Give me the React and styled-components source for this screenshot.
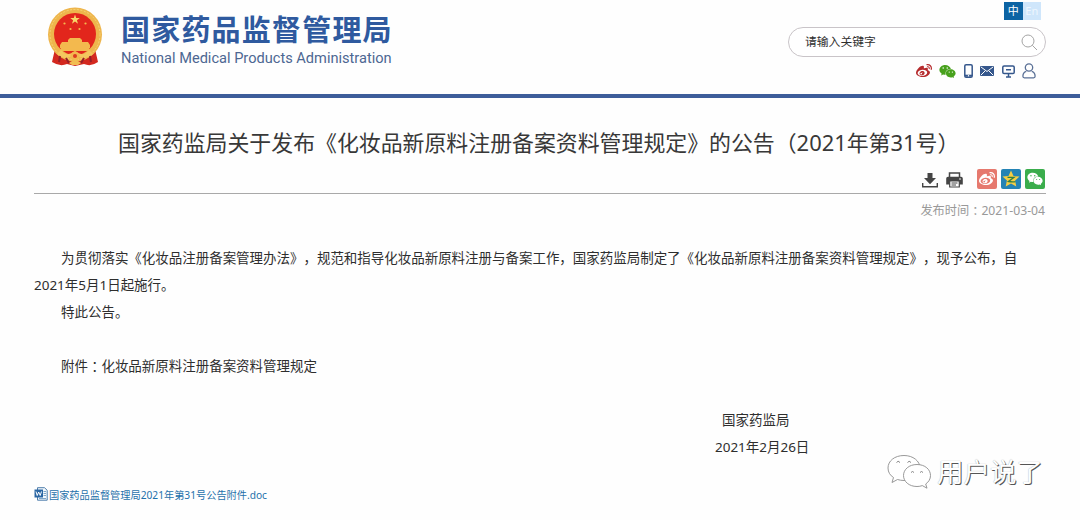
import React from "react";
import styled, { createGlobalStyle, css } from "styled-components";
import { FaWeibo, FaWeixin } from "react-icons/fa";

const GlobalStyle = createGlobalStyle`
  * {
    box-sizing: border-box;
  }

  body {
    margin: 0;
    background: #fefefe;
    color: #2e2e2e;
    font-family: "Noto Sans", "Noto Sans CJK SC", sans-serif;
    text-spacing-trim: space-all;
  }
`;

function Emblem() {
  return (
    <svg width="56" height="60" viewBox="0 0 56 60">
      <path d="M8 42 L5 55 Q13 60 20 57 L28 59 L37 57 Q44 60 51 55 L48 42z" fill="#d3281f" />
      <circle cx="28" cy="27.500" r="27" fill="#eeb54c" />
      <circle cx="28" cy="27.500" r="25" fill="none" stroke="#f6d577" strokeWidth="1" strokeDasharray="2 1.500" />
      <circle cx="28" cy="27" r="21" fill="#e2261c" />
      <path d="M28 7.500l1.200 3.500h3.600l-2.900 2.200 1.100 3.500-3-2.100-3 2.100 1.100-3.500-2.900-2.200h3.600z" fill="#f8d668" />
      <g fill="#f3b94e">
        <circle cx="17.500" cy="16.500" r="1.100" />
        <circle cx="38.500" cy="16.500" r="1.100" />
        <circle cx="23.500" cy="22" r="1.100" />
        <circle cx="32.500" cy="22" r="1.100" />
        <path d="M21 33l2-2h10l2 2v2h6l2 3v3H13v-3l2-3h6z" />
        <path d="M14 41h28l2 3H12z" />
      </g>
      <path d="M14 43q6 8 14 1 8 7 14-1l4 4q-7 7-18 1-11 6-18-1z" fill="#f4c75f" />
      <circle cx="28" cy="49" r="4.500" fill="#f3b94e" />
      <circle cx="28" cy="49" r="2" fill="#dd3b22" />
      <path d="M13 49l-1 6M43 49l1 6M19 51l3 5M37 51l-3 5" stroke="#951f28" strokeWidth="2" />
      <path d="M22 56l6-4 6 4-3 2h-6z" fill="#f1bd52" />
    </svg>
  );
}

function SearchIcon() {
  return (
    <svg width="17" height="17" viewBox="0 0 17 17" fill="none" stroke="#a5a5a5">
      <circle cx="7" cy="7" r="6" />
      <path d="M11.300 11.300L16 16" />
    </svg>
  );
}

function PhoneIcon() {
  return (
    <svg width="9" height="14" viewBox="0 0 9 14">
      <rect x=".8" y=".8" width="7.400" height="12.400" rx="1.300" fill="none" stroke="#35578c" strokeWidth="1.500" />
      <path d="M1 10.700h7v2H1z" fill="#35578c" />
      <circle cx="4.500" cy="11.700" r=".7" fill="#fff" />
    </svg>
  );
}

function MailIcon() {
  return (
    <svg width="14" height="10" viewBox="0 0 14 10">
      <rect width="14" height="10" rx="1" fill="#35578c" />
      <path d="M1 1l6 4.500L13 1M1 9l4-4M13 9L9 5" fill="none" stroke="#fff" strokeWidth="1" />
    </svg>
  );
}

function MonitorIcon() {
  return (
    <svg width="13" height="13" viewBox="0 0 13 13" fill="none" stroke="#35578c" strokeWidth="1.500">
      <rect x=".8" y="1" width="11.400" height="7.500" rx="1.300" />
      <path d="M4 4.800h5M6.500 8.500v3M4 12h5" />
    </svg>
  );
}

function UserIcon() {
  return (
    <svg width="14" height="16" viewBox="0 0 14 16" fill="none" stroke="#5a7096" strokeWidth="1.300">
      <circle cx="7" cy="4.500" r="3.700" />
      <path d="M4.300 8.300C2 9 .9 11 .9 13.300q0 1.500 1.500 1.500h9.200q1.500 0 1.500-1.500c0-2.300-1.100-4.300-3.400-5" />
    </svg>
  );
}

function DownloadIcon() {
  return (
    <svg width="16" height="16" viewBox="0 0 16 16">
      <path d="M5.500 1h5v5H14l-6 6.300L2 6h3.500z" fill="#454545" />
      <path d="M.7 11v3.800h14.600V11" fill="none" stroke="#454545" strokeWidth="1.400" />
    </svg>
  );
}

function PrintIcon() {
  return (
    <svg width="17" height="16" viewBox="0 0 17 16">
      <path d="M3.500 5V1h10v4" fill="none" stroke="#454545" strokeWidth="1.500" />
      <path d="M2 4.800h13a1.800 1.800 0 0 1 1.800 1.800v5.900H.2V6.600A1.800 1.800 0 0 1 2 4.800z" fill="#454545" />
      <circle cx="14" cy="7" r=".8" fill="#fff" />
      <path d="M3.700 9h9.600v6H3.700z" fill="#fff" stroke="#454545" strokeWidth="1.200" />
      <path d="M5.500 11h6M5.500 13h4.500" stroke="#454545" />
    </svg>
  );
}

function QzoneIcon() {
  return (
    <svg width="18" height="18" viewBox="0 0 18 18">
      <path d="M9 .5l2.500 5.400 6 .7-4.400 4 1.200 6-5.300-3-5.300 3 1.200-6-4.400-4 6-.7z" fill="#f6ce45" />
      <path d="M5.500 7.300h6.500l-5.500 4.200q4 .8 7 .2" fill="none" stroke="#318043" strokeWidth="1.300" />
    </svg>
  );
}

function DocIcon() {
  return (
    <svg width="14" height="14" viewBox="0 0 14 14">
      <path d="M3.500.7h7l2.700 2.600v9.900H3.500z" fill="#f3f8fc" stroke="#4e7dab" />
      <path d="M9.500 4.500h2.500M9.500 6.500h2.500M9.500 8.500h2.500M5 11.500h7" stroke="#7ea6c9" />
      <rect x=".5" y="2.500" width="8.500" height="8" fill="#2a66a3" />
      <path d="M2 4.500l1.200 4 1.500-3.500 1.500 3.500 1.300-4" fill="none" stroke="#fff" />
    </svg>
  );
}

function ChatBubbles() {
  return (
    <svg width="46" height="36" viewBox="0 0 46 36" fill="#fff" stroke="#8d8d8d" strokeWidth=".9">
      <path d="M18 1.500C8.500 1.500 2 7 2 14c0 4.200 2.200 7.500 5.500 9.500L6 28.500l5.500-3c2 .6 4 1 6.500 1 9 0 16-5.500 16-12.500S27 1.500 18 1.500z" />
      <path d="M31 10.500c-8 0-13.500 5-13.500 11S23 32.500 31 32.500c2 0 3.700-.3 5.300-.9l4.700 2.600-1.300-4.200c3-2 4.800-5 4.800-8.500 0-6-5.500-11-13.500-11z" />
      <path d="M10.500 8.500q1.500-2.500 3.500 0M21.500 8.500q1.500-2.500 3.500 0M25 18.500q1.500-2 3 0M34 18.500q1.500-2 3 0" fill="none" stroke="#777" />
    </svg>
  );
}

export default function App() {
  return (
    <Page>
      <GlobalStyle />
      <Header>
        <Brand>
          <Emblem />
          <BrandText>
            <BrandName>国家药品监督管理局</BrandName>
            <BrandSub>National Medical Products Administration</BrandSub>
          </BrandText>
        </Brand>
        <Tools>
          <LangSwitch>
            <Lang $active>中</Lang>
            <Lang>En</Lang>
          </LangSwitch>
          <SearchBox>
            <span>请输入关键字</span>
            <SearchIcon />
          </SearchBox>
          <QuickLinks>
            <FaWeibo size={16} color="#b52a2c" />
            <FaWeixin size={17} color="#48a11d" />
            <PhoneIcon />
            <MailIcon />
            <MonitorIcon />
            <UserIcon />
          </QuickLinks>
        </Tools>
      </Header>

      <Article>
        <Title>国家药监局关于发布《化妆品新原料注册备案资料管理规定》的公告（2021年第31号）</Title>
        <Actions>
          <DownloadIcon />
          <PrintIcon />
          <ShareGroup>
            <ShareButton $color="#e6796e">
              <FaWeibo />
            </ShareButton>
            <ShareButton $color="#2483b5">
              <QzoneIcon />
            </ShareButton>
            <ShareButton $color="#3aad4c">
              <FaWeixin />
            </ShareButton>
          </ShareGroup>
        </Actions>
        <PublishDate>
          发布时间<Colon>：</Colon>2021-03-04
        </PublishDate>

        <Body>
          <Paragraph>
            为贯彻落实《化妆品注册备案管理办法》，规范和指导化妆品新原料注册与备案工作，国家药监局制定了《化妆品新原料注册备案资料管理规定》，现予公布，自
            <br />
            2021年5月1日起施行。
          </Paragraph>
          <Paragraph $gap>特此公告。</Paragraph>
          <Paragraph $gap>
            附件<Colon>：</Colon>化妆品新原料注册备案资料管理规定
          </Paragraph>
          <Signature>
            <Signer>国家药监局</Signer>
            <span>2021年2月26日</span>
          </Signature>
        </Body>

        <Attachment>
          <DocIcon />
          <span>国家药品监督管理局2021年第31号公告附件.doc</span>
        </Attachment>
      </Article>

      <Watermark>
        <ChatBubbles />
        <span>用户说了</span>
      </Watermark>
    </Page>
  );
}

const Page = styled.div`
  position: relative;
  width: 1080px;
  height: 520px;
  overflow: hidden;
`;

const Header = styled.header`
  display: flex;
  justify-content: space-between;
  height: 98px;
  padding: 0 34px 0 47px;
  border-bottom: 4px solid #3d5d9a;
`;

const Brand = styled.div`
  display: flex;
  gap: 18px;
  padding-top: 7px;
`;

const BrandText = styled.div`
  display: flex;
  flex-direction: column;
  padding-top: 5px;
  white-space: nowrap;
`;

const BrandName = styled.div`
  color: #2f5a9f;
  font-size: 29px;
  font-weight: 700;
  letter-spacing: 1.2px;
  line-height: 35px;
`;

const BrandSub = styled.div`
  color: #4d6792;
  font-family: Roboto, sans-serif;
  font-size: 14.6px;
  line-height: 23px;
`;

const Tools = styled.div`
  display: flex;
  flex-direction: column;
  width: 258px;
  padding-top: 2px;
`;

const LangSwitch = styled.div`
  display: flex;
  justify-content: flex-end;
  padding-right: 5px;
`;

const Lang = styled.span`
  width: 18.5px;
  height: 18px;
  background: ${(p) => (p.$active ? "#0c63a3" : "#cfe6fb")};
  color: ${(p) => (p.$active ? "#fff" : "#eef6fe")};
  font-size: 11px;
  line-height: 17px;
  text-align: center;
`;

const SearchBox = styled.div`
  display: flex;
  align-items: center;
  justify-content: space-between;
  height: 30px;
  margin-top: 7px;
  padding: 0 7px 0 16px;
  border: 1px solid #c9c4c8;
  border-radius: 15px;
  background: #fff;
  font-size: 11.8px;
  line-height: 16px;

  span {
    padding-bottom: 2px;
  }
`;

const QuickLinks = styled.div`
  display: flex;
  align-items: center;
  justify-content: flex-end;
  gap: 7.500px;
  height: 16px;
  margin-top: 6px;
  padding-right: 10px;
`;

const Article = styled.main`
  display: flex;
  flex-direction: column;
  padding: 0 34px;
`;

const Title = styled.h1`
  margin: 28px 0 0;
  padding-left: 84px;
  color: #383838;
  font-size: 21.9px;
  font-weight: 400;
  line-height: 34px;
  white-space: nowrap;
`;

const Actions = styled.div`
  display: flex;
  align-items: center;
  justify-content: flex-end;
  gap: 8px;
  height: 34px;
  padding: 7px 1px 0 0;
  border-bottom: 1px solid #a9a9a9;
`;

const ShareGroup = styled.div`
  display: flex;
  gap: 4px;
  margin-left: 6px;
  padding-bottom: 3px;
`;

const ShareButton = styled.span`
  display: flex;
  align-items: center;
  justify-content: center;
  width: 20px;
  height: 20px;
  border-radius: 2px;
  background: ${(p) => p.$color};
  color: #fff;
  font-size: 16px;
`;

const PublishDate = styled.div`
  padding-right: 1px;
  color: #999;
  font-size: 12.2px;
  line-height: 18px;
  margin-top: 8px;
  text-align: right;
`;

/* The TC face centres the colon in its cell */
const Colon = styled.span`
  font-family: "Noto Sans CJK TC", sans-serif;
  line-height: 1;
  vertical-align: -1px;
`;

const Body = styled.section`
  margin-top: 25px;
  font-size: 13.48px;
  line-height: 27px;
  white-space: nowrap;
`;

const Paragraph = styled.p`
  margin: 0;
  text-indent: 27px;

  ${(p) =>
    p.$gap &&
    css`
      margin-bottom: 27px;
    `}
`;

const Signature = styled.div`
  display: flex;
  flex-direction: column;
  padding-left: 681px;
`;

const Signer = styled.span`
  padding-left: 7px;
`;

const Attachment = styled.div`
  display: flex;
  align-items: center;
  gap: 1px;
  height: 18px;
  margin-top: 24px;
  color: #1f71ab;
  font-size: 10.2px;
`;

/* Sits over the lower right corner of the article */
const Watermark = styled.div`
  position: absolute;
  left: 886px;
  top: 454px;
  display: flex;
  align-items: center;
  gap: 5px;
  color: #fff;
  font-size: 26.5px;
  line-height: 36px;
  text-shadow: 1px 1px 0 #555, 0 0 1px #999;
`;
